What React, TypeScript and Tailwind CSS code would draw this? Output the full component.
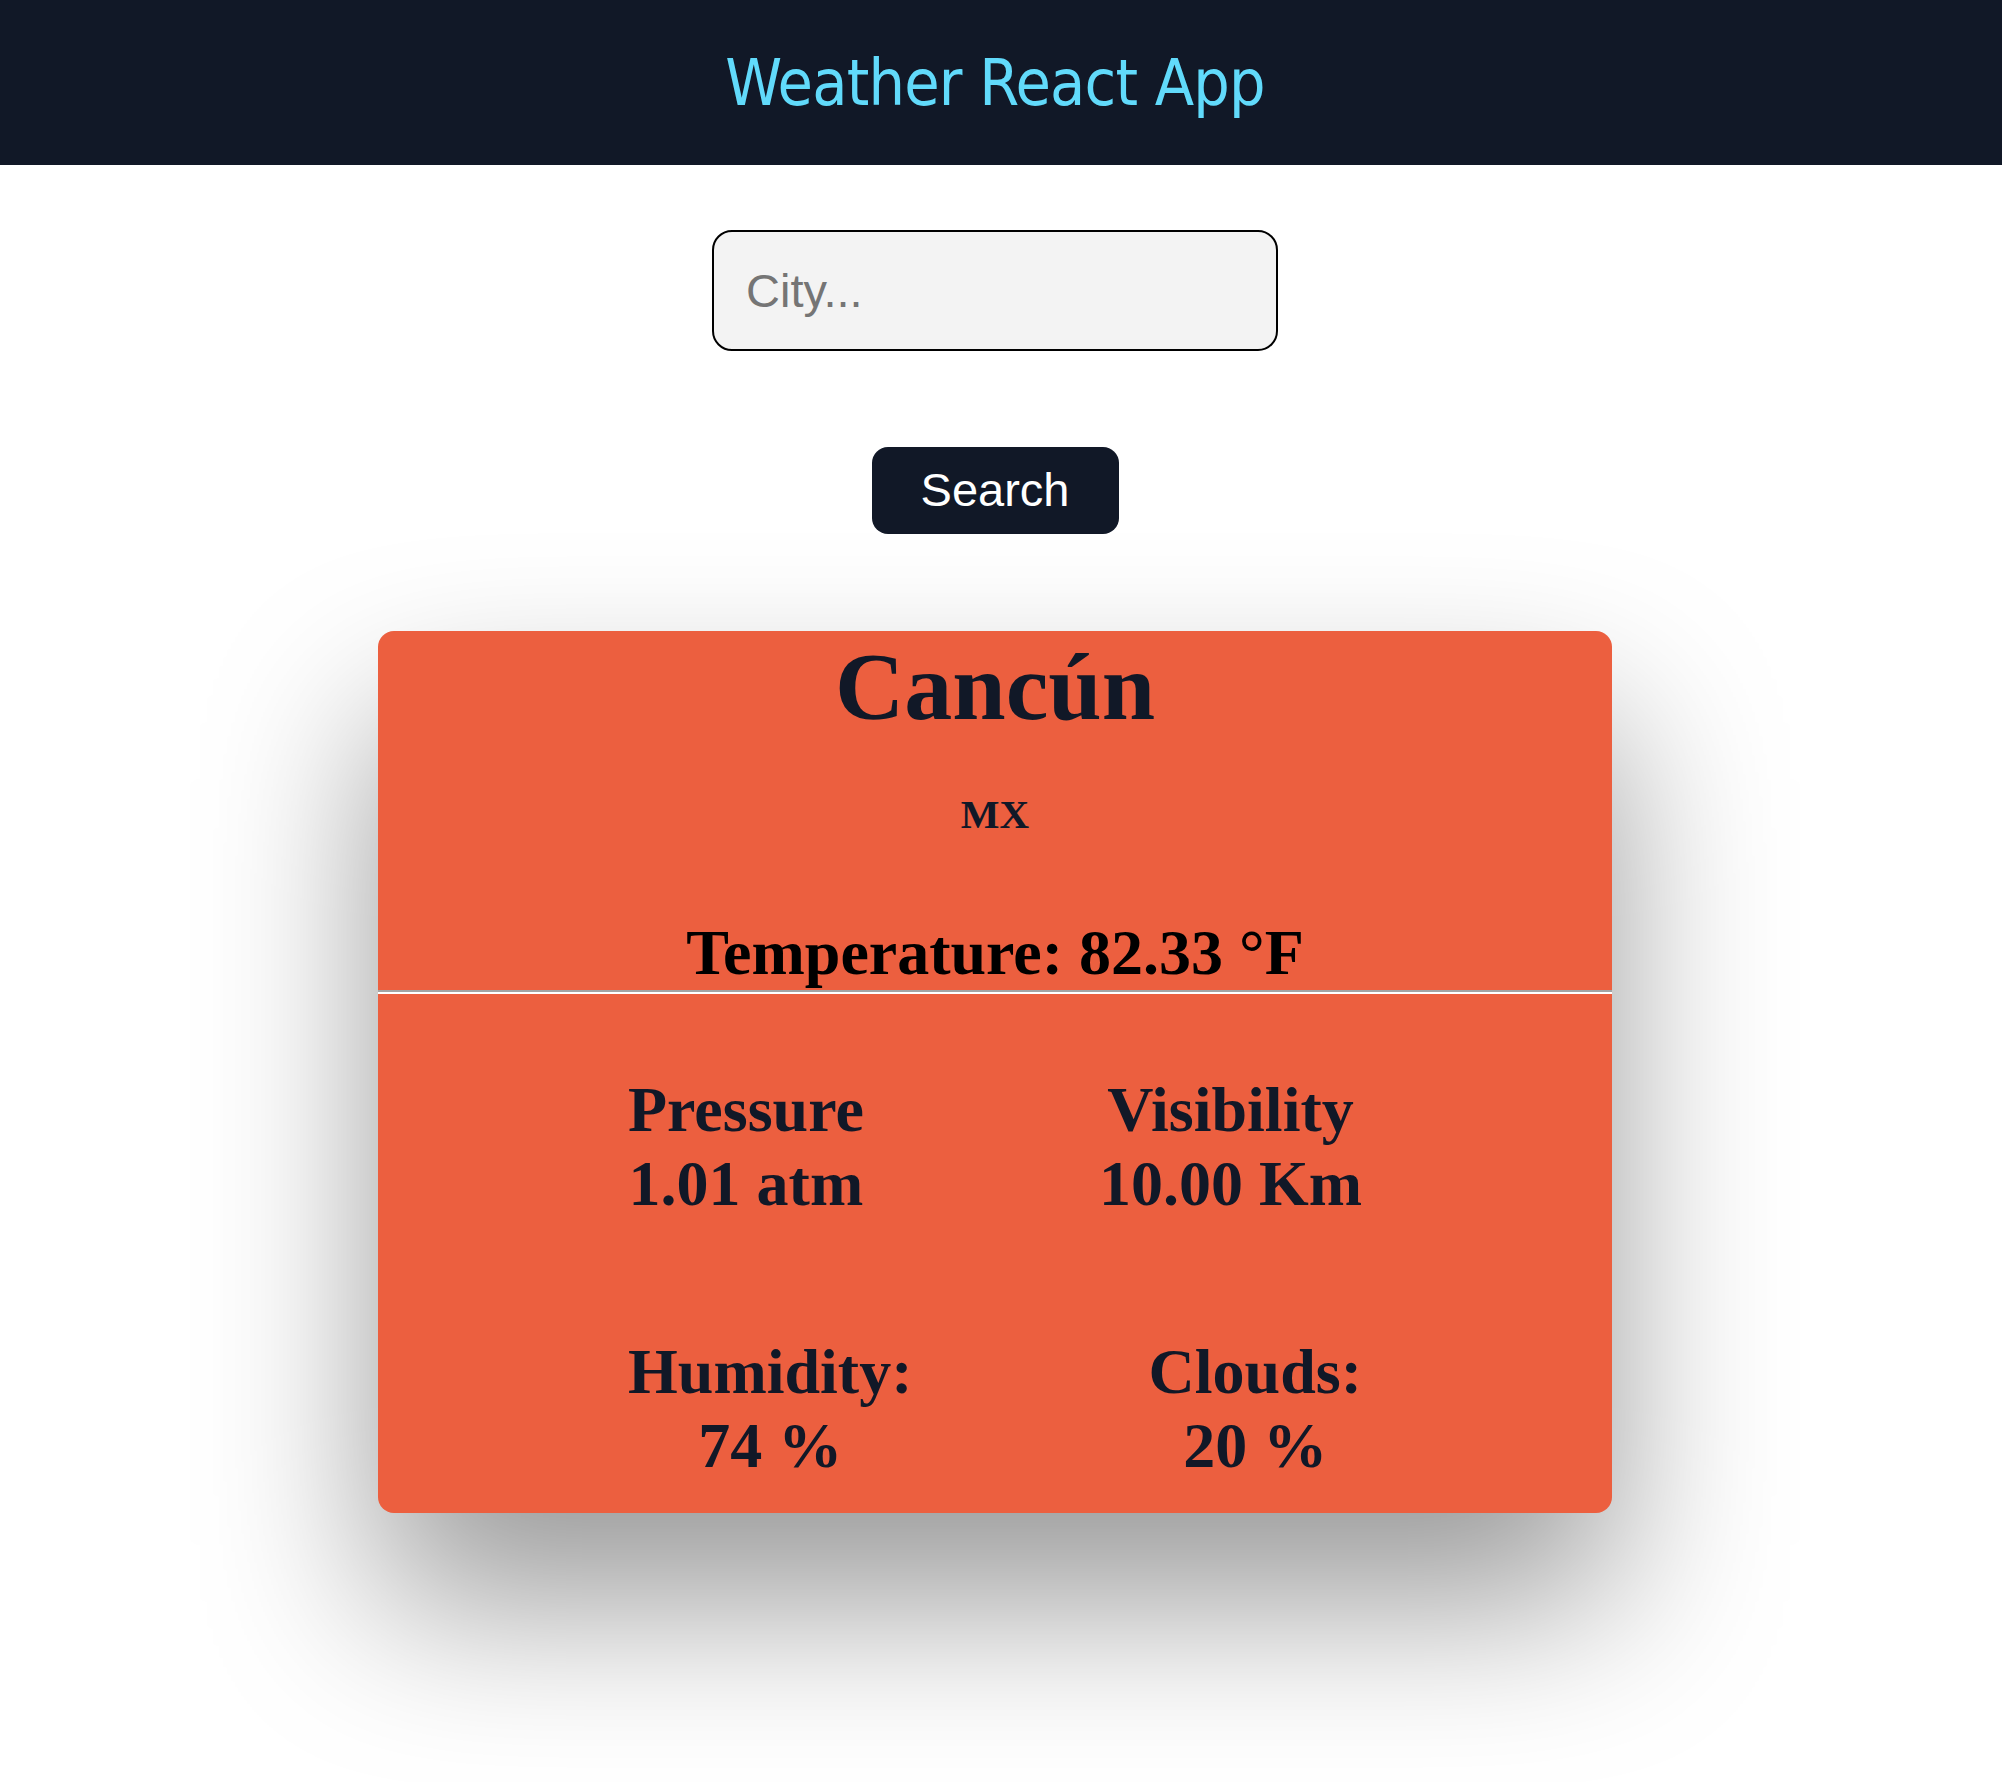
import React from "react"

type Stat = {
    label: string,
    value: string,
}

const topStats: Array<Stat> = [
    { label: "Pressure", value: "1.01 atm" },
    { label: "Visibility", value: "10.00 Km" },
]

const bottomStats: Array<Stat> = [
    { label: "Humidity:", value: "74 %" },
    { label: "Clouds:", value: "20 %" },
]

const serif = "font-['Liberation_Serif','Times_New_Roman',serif]"

function Header() {
    return (
        <div className="w-full h-[165px] bg-[#111827] flex items-center justify-center pr-3">
            <h1 className="text-[64px] leading-[normal] tracking-[-0.8px] text-[#61dafb] font-['DejaVu_Sans_Condensed','DejaVu_Sans',sans-serif]">
                Weather React App
            </h1>
        </div>
    )
}

function SearchBox() {
    return (
        <div className="flex flex-col items-center">
            <input
                type="text"
                placeholder="City..."
                className="mt-[65px] w-[566px] h-[121px] rounded-[20px] border-2 border-black bg-[#f3f3f3] pl-[32px] text-[47px] text-black placeholder:text-[#757575] outline-none font-['Liberation_Sans',Arial,sans-serif]"
            />
            <button
                className="mt-[96px] w-[247px] h-[87px] rounded-2xl bg-[#111827] text-white text-[47px] font-['Liberation_Sans',Arial,sans-serif]"
            >
                Search
            </button>
        </div>
    )
}

function StatRow({ stats, className }: { stats: Array<Stat>, className: string }) {
    return (
        <div className={"flex flex-row justify-between px-[250px] " + className}>
            {
                stats.map((el) => (
                    <div key={el.label} className="flex flex-col items-center text-[64px] leading-[normal] font-bold text-[#111827]">
                        <span>{el.label}</span>
                        <span>{el.value}</span>
                    </div>
                ))
            }
        </div>
    )
}

function WeatherCard() {
    return (
        <div className={"mt-[97px] w-[1234px] h-[882px] rounded-2xl bg-[#ec5f3f] flex flex-col shadow-[0_90px_170px_rgba(0,0,0,0.4)] " + serif}>
            <h1 className="text-center text-[96px] leading-[normal] font-bold text-[#111827]">Cancún</h1>
            <h3 className="mt-[48px] text-center text-[41px] leading-[normal] font-bold text-[#111827]">MX</h3>
            <h2 className="mt-[78px] text-center text-[64px] leading-[normal] font-bold text-black">Temperature: 82.33 °F</h2>
            <div className="border-t-2 border-b-2 border-t-[#a3a3a3] border-b-white" />
            <StatRow stats={topStats} className="mt-[79px]" />
            <StatRow stats={bottomStats} className="mt-[114px]" />
        </div>
    )
}

export default function App() {
    return (
        <main className="min-h-screen w-full bg-white">
            <Header />
            <div className="flex flex-col items-center pr-3 pb-[270px]">
                <SearchBox />
                <WeatherCard />
            </div>
        </main>
    )
}
